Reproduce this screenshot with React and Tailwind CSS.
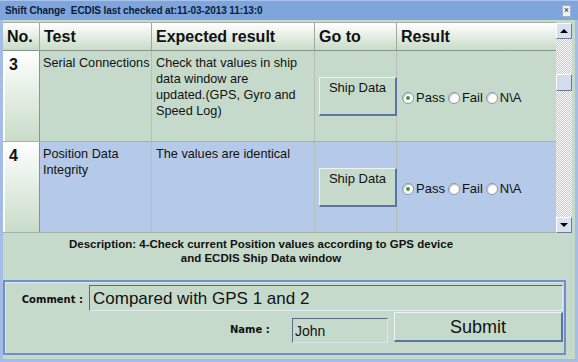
import React from 'react';

const rows = [
  {
    no: '3',
    test: ['Serial Connections'],
    expected: ['Check that values in ship', 'data window are', 'updated.(GPS, Gyro and', 'Speed Log)'],
    bg: 'bg-[#c6dacb]',
  },
  {
    no: '4',
    test: ['Position Data', 'Integrity'],
    expected: ['The values are identical'],
    bg: 'bg-[#b5c9e8]',
  },
];

const Radio = ({ checked, label }) => (
  <span className="flex items-center gap-[2px]">
    <span className="w-[12px] h-[12px] rounded-full border border-[#8a98a8] bg-white flex items-center justify-center shadow-[inset_1px_1px_1px_#b8c0c8]">
      {checked && <span className="w-[4px] h-[4px] rounded-full bg-[#3c9a3c]" />}
    </span>
    <span>{label}</span>
  </span>
);

const App = () => {
  return (
    <div className="w-[578px] h-[362px] bg-[#a3bde6] flex flex-col overflow-hidden text-[#111] font-['Liberation_Sans',Arial,sans-serif]">
      {/* Title bar */}
      <div className="h-[20px] bg-[#7ea6dc] border-t border-[#a8c4ec] flex items-center justify-between pl-[5px] pr-[7px]">
        <span className="text-[10px] font-bold text-[#0c1a3c] tracking-[-0.1px]">
          Shift Change&nbsp;&nbsp;ECDIS last checked at:11-03-2013 11:13:0
        </span>
        <span className="w-[9px] h-[12px] bg-[#eef2f8] border border-[#a0b0c8] flex items-center justify-center text-[9px] leading-none text-[#222]">
          ×
        </span>
      </div>

      {/* Body */}
      <div className="flex-1 mx-[3px] mb-[3px] bg-[#c6dacb] flex flex-col">
        <div className="flex pt-[2px] h-[214px]">
          {/* Table */}
          <div className="w-[553px] flex flex-col border-t border-[#a4aca4]">
            <div className="grid grid-cols-[37px_112px_163px_82px_1fr] h-[28px] bg-gradient-to-b from-white to-[#c8dcc8] border-b border-[#8a948a] text-[16px] font-bold">
              {['No.', 'Test', 'Expected result', 'Go to', 'Result'].map((h, i) => (
                <div key={h} className={`flex items-center pl-[4px] ${i < 4 ? 'border-r border-[#a0a8a0]' : ''}`}>
                  {h}
                </div>
              ))}
            </div>
            {rows.map((r) => (
              <div
                key={r.no}
                className={`grid grid-cols-[37px_112px_163px_82px_1fr] h-[91px] ${r.bg} border-b border-[#a6b2a8] text-[12.7px] leading-[16px]`}
              >
                <div className="bg-gradient-to-b from-white to-[#c8dcc8] border-l-2 border-white border-r border-r-[#8a948a] pl-[4px] pt-[4px] text-[16px] font-bold leading-[20px]">
                  {r.no}
                </div>
                <div className="border-r border-[#b4c0b8] pl-[3px] pt-[4px] whitespace-nowrap">
                  {r.test.map((l) => (
                    <div key={l}>{l}</div>
                  ))}
                </div>
                <div className="border-r border-[#b4c0b8] pl-[4px] pt-[4px] whitespace-nowrap">
                  {r.expected.map((l) => (
                    <div key={l}>{l}</div>
                  ))}
                </div>
                <div className="border-r border-[#b4c0b8] pl-[4px] pt-[26px]">
                  <button className="w-[78px] h-[39px] bg-[#c6dacb] border border-t-[#eef4f4] border-l-[#eef4f4] border-b-2 border-r-2 border-b-[#5a74a4] border-r-[#5a74a4] pt-[2px] text-[13px] leading-[16px] flex justify-center items-start">
                    Ship Data
                  </button>
                </div>
                <div className="pl-[5px] pt-[39px] flex items-start gap-[3px] text-[13px]">
                  <Radio checked label="Pass" />
                  <Radio label="Fail" />
                  <Radio label="N\A" />
                </div>
              </div>
            ))}
          </div>

          {/* Scrollbar */}
          <div className="w-[16px] h-[210px] mt-[1px] flex flex-col bg-[conic-gradient(#ffffff_25%,#b4c8ea_0_50%,#ffffff_0_75%,#b4c8ea_0)] bg-[length:2px_2px]">
            <div className="h-[16px] bg-[#d8e2f0] border border-t-white border-l-white border-b-[#6c7c98] border-r-[#6c7c98] flex items-center justify-center">
              <span className="w-0 h-0 border-x-[4px] border-x-transparent border-b-[4px] border-b-black" />
            </div>
            <div className="mt-[35px] h-[17px] bg-[#d2dcec] border border-t-white border-l-white border-b-[#6c7c98] border-r-[#6c7c98]" />
            <div className="flex-1" />
            <div className="h-[16px] bg-[#d8e2f0] border border-t-white border-l-white border-b-[#6c7c98] border-r-[#6c7c98] flex items-center justify-center">
              <span className="w-0 h-0 border-x-[4px] border-x-transparent border-t-[4px] border-t-black" />
            </div>
          </div>
        </div>

        {/* Description */}
        <div className="h-[46px] pt-[3px] mr-[56px] text-center text-[11.5px] font-bold leading-[14px]">
          Description: 4-Check current Position values according to GPS device
          <br />
          and ECDIS Ship Data window
        </div>

        {/* Bottom panel */}
        <div className="mr-[9px] h-[75px] border-2 border-[#7090cc] shadow-[inset_1px_1px_0_#dce8f4] flex flex-col">
          <div className="flex items-center mt-[3px]">
            <span className="w-[78px] mt-[3px] text-right text-[10px] font-bold font-['DejaVu_Sans',sans-serif] whitespace-nowrap">Comment :</span>
            <div className="ml-[6px] flex-1 mr-[1px] h-[26px] border border-t-[#5c6c88] border-l-[#5c6c88] border-b-[#e4ecf4] border-r-[#e4ecf4] bg-[#c6dacb] flex items-center pl-[3px] text-[17px] leading-none">
              Compared with GPS 1 and 2
            </div>
          </div>
          <div className="flex items-start mt-[1px]">
            <span className="ml-[225px] mt-[10px] w-[40px] text-[10px] font-bold font-['DejaVu_Sans',sans-serif] whitespace-nowrap">Name :</span>
            <div className="ml-[22px] mt-[6px] w-[96px] h-[25px] border border-[#5c6c88] border-b-[#dce6f0] border-r-[#dce6f0] bg-[#c6dacb] flex items-center pl-[2px] text-[14px] leading-none">
              John
            </div>
            <button className="ml-[6px] w-[169px] h-[30px] bg-[#c6dacb] border border-t-[#eef4f4] border-l-[#eef4f4] border-b-2 border-r-2 border-b-[#5a74a4] border-r-[#5a74a4] text-[18px] leading-none flex items-center justify-center">
              Submit
            </button>
          </div>
        </div>
      </div>
    </div>
  );
};

export default App;
